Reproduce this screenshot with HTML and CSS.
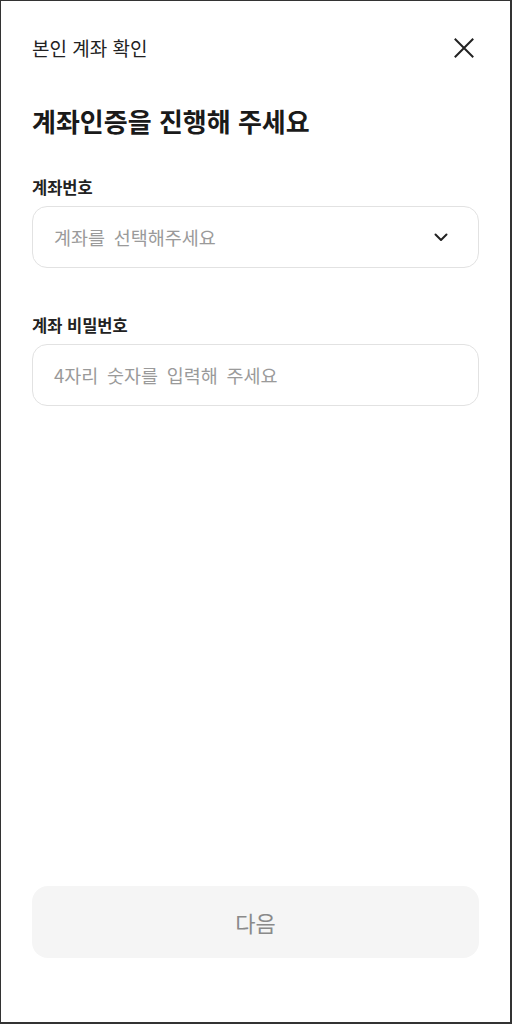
FILE: index.html
```html
<!DOCTYPE html>
<html lang="ko">
<head>
<meta charset="utf-8">
<title>본인 계좌 확인</title>
<link rel="stylesheet" href="styles.css">
</head>
<body>
<div class="screen">
  <header class="topbar">
    <h1 class="topbar-title">본인 계좌 확인</h1>
    <button class="close-btn" aria-label="닫기">
      <svg width="20" height="20" viewBox="0 0 20 20" fill="none" stroke="#222" stroke-width="2" stroke-linecap="square">
        <path d="M1.5 1.5L18.5 18.5M18.5 1.5L1.5 18.5"/>
      </svg>
    </button>
  </header>

  <main class="content">
    <h2 class="headline">계좌인증을 진행해 주세요</h2>

    <div class="field field-first">
      <label class="field-label">계좌번호</label>
      <div class="box select-box">
        <span class="placeholder">계좌를 선택해주세요</span>
        <svg class="chevron" width="14" height="9" viewBox="0 0 14 9" fill="none" stroke="#222" stroke-width="2" stroke-linecap="round" stroke-linejoin="round">
          <path d="M1.5 1.5L7 7L12.5 1.5"/>
        </svg>
      </div>
    </div>

    <div class="field">
      <label class="field-label">계좌 비밀번호</label>
      <div class="box">
        <span class="placeholder">4자리 숫자를 입력해 주세요</span>
      </div>
    </div>
  </main>

  <footer class="bottom">
    <button class="next-btn">다음</button>
  </footer>
</div>
</body>
</html>
```

FILE: styles.css
```css
* {
  box-sizing: border-box;
  margin: 0;
  padding: 0;
}

html, body {
  width: 512px;
  height: 1024px;
  background: #fff;
}

body {
  font-family: "Noto Sans CJK KR", "Noto Sans", sans-serif;
  color: #222;
}

.screen {
  width: 512px;
  height: 1024px;
  border: 1px solid #333;
  border-right-width: 2px;
  border-bottom-width: 2px;
  display: flex;
  flex-direction: column;
}

.topbar {
  height: 93px;
  padding: 0 36px 0 31px;
  display: flex;
  align-items: center;
  justify-content: space-between;
}

.topbar-title {
  font-size: 19px;
  font-weight: 400;
  line-height: 26px;
  color: #222;
}

.close-btn {
  border: 0;
  background: none;
  width: 20px;
  height: 20px;
  display: flex;
}

.content {
  padding: 10px 31px 0 31px;
}

.headline {
  font-size: 26px;
  font-weight: 700;
  line-height: 34px;
  color: #1a1a1a;
}

.field {
  margin-top: 46px;
  display: flex;
  flex-direction: column;
  gap: 8px;
}

.field-first {
  margin-top: 38px;
}

.field-label {
  font-size: 16.5px;
  font-weight: 700;
  line-height: 22px;
  color: #222;
}

.box {
  height: 62px;
  border: 1px solid #e2e2e2;
  border-radius: 15px;
  padding: 0 22px 0 21px;
  display: flex;
  align-items: center;
  justify-content: space-between;
}

.placeholder {
  font-size: 18.5px;
  line-height: 26px;
  word-spacing: 3.5px;
  color: #9a9a9a;
}

.chevron {
  margin-right: 8px;
}

.bottom {
  margin-top: auto;
  padding: 0 31px 64px 31px;
}

.next-btn {
  width: 100%;
  height: 72px;
  border: 0;
  border-radius: 16px;
  background: #f5f5f5;
  font-family: "Noto Sans CJK KR", "Noto Sans", sans-serif;
  font-size: 22px;
  font-weight: 400;
  color: #8a8a8a;
}
```
